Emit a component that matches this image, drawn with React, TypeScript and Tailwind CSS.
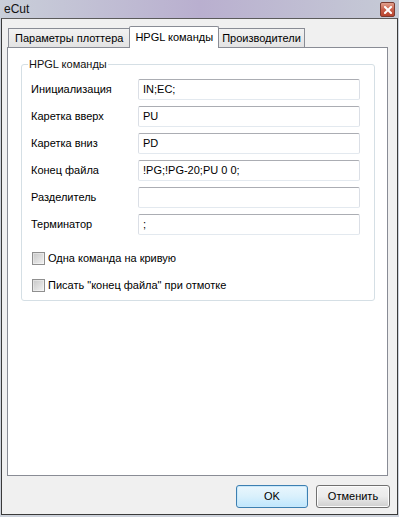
import React, { useState } from 'react';

const rows = [
  { label: 'Инициализация', value: 'IN;EC;' },
  { label: 'Каретка вверх', value: 'PU' },
  { label: 'Каретка вниз', value: 'PD' },
  { label: 'Конец файла', value: '!PG;!PG-20;PU 0 0;' },
  { label: 'Разделитель', value: '' },
  { label: 'Терминатор', value: ';' },
];

const tabs = ['Параметры плоттера', 'HPGL команды', 'Производители'];

const Check: React.FC<{ label: string }> = ({ label }) => (
  <label className="flex items-center h-[14px] gap-[3px]">
    <span className="w-[13px] h-[13px] border border-[#8f8f8f] bg-gradient-to-br from-[#dcdcdc] to-[#f7f7f7] flex items-center justify-center">
      <span className="w-[9px] h-[9px] bg-gradient-to-br from-[#cbcbcb] to-[#eeeeee]"></span>
    </span>
    <span>{label}</span>
  </label>
);

export default function App() {
  const [active] = useState(1);

  return (
    <div
      className="w-[399px] h-[517px] flex flex-col bg-[#cdd2db] text-black text-[11px] leading-none"
      style={{ fontFamily: '"Liberation Sans", Arial, sans-serif' }}
    >
      {/* title bar */}
      <div className="h-[18px] flex items-center justify-between pl-[4px] pr-[4px] bg-gradient-to-r from-[#c9cfd9] via-[#b9afcf] to-[#c6cbd6]">
        <span className="text-[12px] text-[#111]">eCut</span>
        <div className="w-[15px] h-[15px] mt-[1px] rounded-[2px] border border-[#7a3a30] bg-gradient-to-b from-[#e0a08e] via-[#c9604c] to-[#b8442f] flex items-center justify-center">
          <svg width="8" height="8" viewBox="0 0 8 8">
            <path d="M1 1 L7 7 M7 1 L1 7" stroke="#fff" strokeWidth="2" strokeLinecap="square" />
          </svg>
        </div>
      </div>

      {/* body */}
      <div className="mx-[1px] mb-[2px] flex-1 border border-[#3a3a3a] border-t-[#5b5b5b] bg-[#f0f0f0] flex flex-col pl-[5px] pt-[7px]">
        <div className="flex items-end h-[21px] pl-[1px] relative z-10">
          {tabs.map((t, i) =>
            i === active ? (
              <div
                key={t}
                className="h-[22px] -mb-[1px] px-[5px] flex items-center bg-white border border-b-0 border-[#898c95] rounded-t-[2px] -ml-[1px]"
              >
                {t}
              </div>
            ) : (
              <div
                key={t}
                className={`h-[19px] flex items-center bg-gradient-to-b from-[#f2f2f2] to-[#e3e3e3] border border-b-0 border-[#898c95] ${i === 0 ? 'px-[6px]' : '-ml-[1px] px-[3px]'}`}
              >
                {t}
              </div>
            )
          )}
        </div>

        <div className="w-[381px] h-[429px] bg-white border border-[#898c95] pt-[16px] pl-[13px]">
          <div className="relative w-[354px] h-[237px] border border-[#d5dfe5] rounded-[3px] pt-[14px] pl-[9px]">
            <span className="absolute -top-[6px] left-[6px] bg-white px-[1px] text-[#111]">HPGL команды</span>
            <div className="flex flex-col gap-[6px]">
              {rows.map(r => (
                <div key={r.label} className="flex items-center h-[21px]">
                  <span className="w-[107px]">{r.label}</span>
                  <div className="w-[222px] h-[21px] flex items-center px-[4px] bg-white border border-[#abadb3] border-l-[#dbdfe6] border-r-[#dbdfe6] border-b-[#e3e9ef] rounded-[2px]">
                    {r.value}
                  </div>
                </div>
              ))}
            </div>
            <div className="flex flex-col gap-[13px] mt-[16px] pl-[1px]">
              <Check label="Одна команда на кривую" />
              <Check label='Писать "конец файла" при отмотке' />
            </div>
          </div>
        </div>

        <div className="flex justify-end gap-[8px] pr-[7px] pt-[9px]">
          <button className="w-[72px] h-[23px] rounded-[3px] border border-[#3c7fb1] bg-gradient-to-b from-[#eaf6fd] via-[#d9f0fc] to-[#bee6fd] shadow-[inset_0_0_0_1px_#c9e8fa]">
            OK
          </button>
          <button className="w-[74px] h-[23px] rounded-[3px] border border-[#707070] bg-gradient-to-b from-[#f2f2f2] via-[#ebebeb] to-[#cfcfcf] shadow-[inset_0_0_0_1px_#fcfcfc]">
            Отменить
          </button>
        </div>
      </div>
    </div>
  );
}
